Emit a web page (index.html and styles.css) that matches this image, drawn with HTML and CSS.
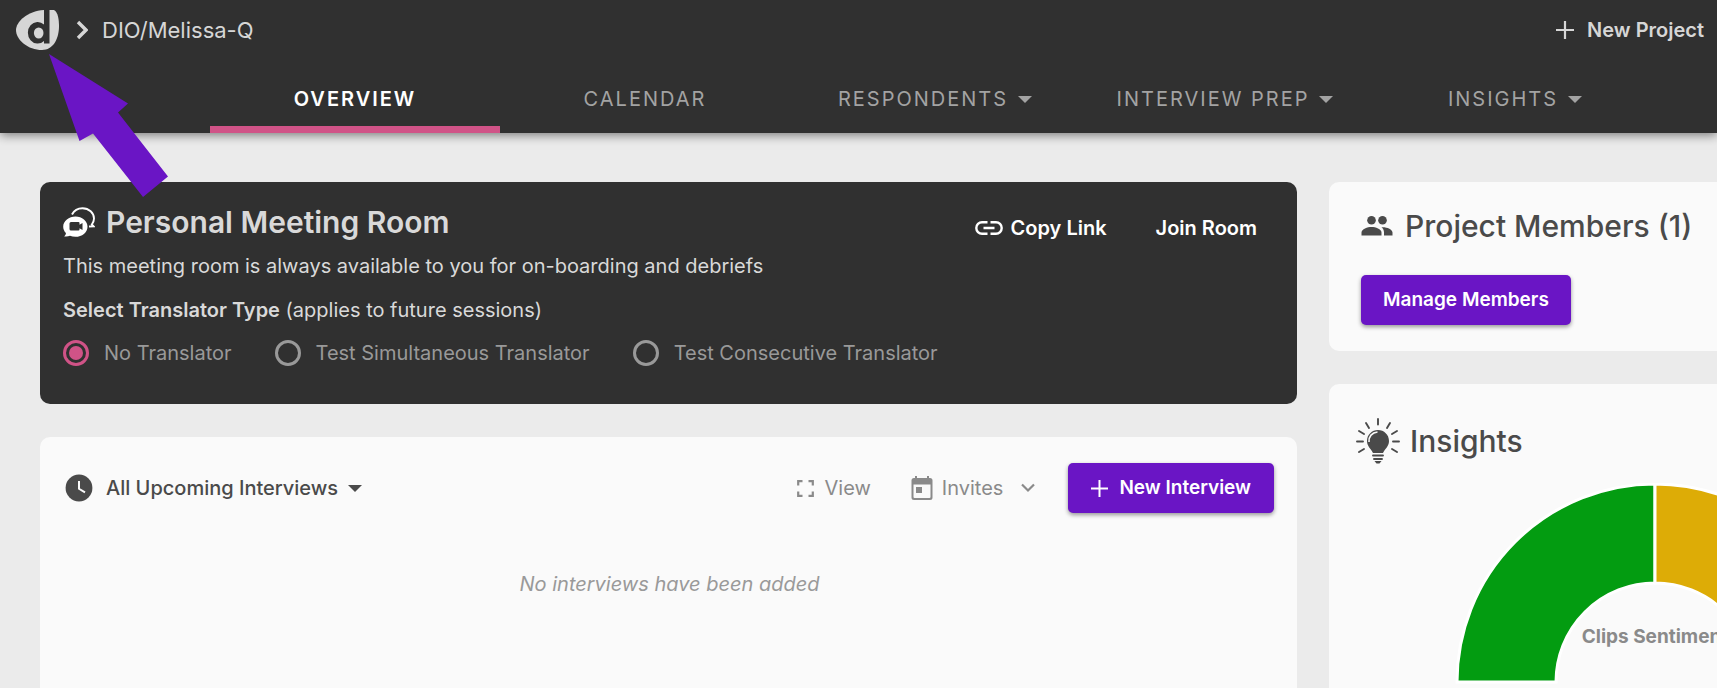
FILE: index.html
```html
<!DOCTYPE html>
<html lang="en">
<head>
  <meta charset="UTF-8">
  <meta name="viewport" content="width=device-width, initial-scale=1.0">
  <title>DIO/Melissa-Q</title>
  <link rel="stylesheet" href="styles.css">
</head>
<body>
  <header class="header">
    <div class="topbar">
      <a class="logo" href="#" aria-label="Home">
        <svg width="44" height="42" viewBox="0 0 44 42">
          <path fill="#d6d6d6" d="M1 21C1 13 12 2 29 1H39C43 3 44 11 44 17C44 30 38 41 27 41C13 41 1 31 1 21Z"/>
          <path fill="#303030" d="M29 0h5.500v34.500H29v-2.500a9.800 10.800 0 1 1 0-16.500z"/>
          <ellipse fill="#d6d6d6" cx="23.700" cy="24" rx="4.800" ry="5.500"/>
        </svg>
      </a>
      <svg class="crumb-arrow" width="12" height="20" viewBox="0 0 12 20"><path d="M2 2l8 8-8 8" fill="none" stroke="#d6d6d6" stroke-width="3.400"/></svg>
      <span class="project-name">DIO/Melissa-Q</span>
      <button class="new-project">
        <svg width="20" height="20" viewBox="0 0 20 20"><path d="M10 1v18M1 10h18" stroke="currentColor" stroke-width="2.200"/></svg>
        New Project
      </button>
    </div>
    <nav class="tabs">
      <a class="tab active" href="#">OVERVIEW</a>
      <a class="tab" href="#">CALENDAR</a>
      <a class="tab" href="#">RESPONDENTS <span class="caret"></span></a>
      <a class="tab" href="#">INTERVIEW PREP <span class="caret"></span></a>
      <a class="tab" href="#">INSIGHTS <span class="caret"></span></a>
    </nav>
  </header>

  <main class="content">
    <div class="column">
      <section class="card room">
        <div class="room-text">
          <h2 class="title">
            <svg width="32" height="30" viewBox="0 0 32 30">
              <path d="M9 7.500C11 3.500 15 1.200 19.500 1.200C26 1.200 31 6 31 11.500C31 14 30 16 28.800 17.500L30.500 19.300L26 19.500" fill="none" stroke="#fff" stroke-width="1.900"/>
              <path d="M12.500 9.500C19 9.500 24.500 14 24.500 19.700C24.500 25.500 19 29.800 12.500 29.800C10.500 29.800 8.600 29.400 7 28.700C5.300 29.500 3 29.800 1 29.300C2.300 28.500 3 27.400 2.900 26C1.200 24.200 0.200 22 0.200 19.700C0.200 14 6 9.500 12.500 9.500Z" fill="#fff"/>
              <path d="M8 15h7.500q1 0 1 1v1.700l3-1.700v7l-3-1.700v1.200q0 1-1 1H8q-1.500 0-1.500-1.500v-5.500q0-1.500 1.500-1.500z" fill="#303030"/>
            </svg>
            Personal Meeting Room
          </h2>
          <p>This meeting room is always available to you for on-boarding and debriefs</p>
          <p><b>Select Translator Type</b> (applies to future sessions)</p>
          <div class="radios">
            <label><input type="radio" name="translator" checked>No Translator</label>
            <label><input type="radio" name="translator">Test Simultaneous Translator</label>
            <label><input type="radio" name="translator">Test Consecutive Translator</label>
          </div>
        </div>
        <div class="room-actions">
          <button>
            <svg width="28" height="14" viewBox="0 0 28 14"><path d="M12.500 1.300H7a5.700 5.700 0 0 0 0 11.400h5.500M15.500 1.300H21a5.700 5.700 0 0 1 0 11.400h-5.500M8.500 7h11" fill="none" stroke="#fff" stroke-width="2.400"/></svg>
            Copy Link
          </button>
          <button>Join Room</button>
        </div>
      </section>

      <section class="card interviews">
        <div class="toolbar">
          <button class="filter">
            <svg width="28" height="28" viewBox="0 0 28 28"><circle cx="14" cy="14" r="13.400" fill="#4a4a4a"/><path d="M14 7v7.800l6 3.600" fill="none" stroke="#fafafa" stroke-width="2"/></svg>
            All Upcoming Interviews <span class="caret"></span>
          </button>
          <button class="tool">
            <svg width="17" height="17" viewBox="0 0 17 17"><path d="M1.200 5.500V1.200h4.300M11.500 1.200h4.300v4.300M15.800 11.500v4.300h-4.300M5.500 15.800H1.200v-4.300" fill="none" stroke="currentColor" stroke-width="2.200"/></svg>
            View
          </button>
          <button class="tool invites">
            <svg width="22" height="24" viewBox="0 0 22 24"><path d="M5 0v4M17 0v4" stroke="currentColor" stroke-width="2"/><path d="M3 2h16q2.500 0 2.500 2.500v17q0 2.500-2.500 2.500H3q-2.500 0-2.500-2.500v-17Q.500 2 3 2zM2.500 8.500v12.500q0 1 1 1h15q1 0 1-1v-12.500z" fill="currentColor" fill-rule="evenodd"/><path d="M5 11h6v6H5z" fill="currentColor"/></svg>
            Invites
            <svg class="chevron" width="14" height="10" viewBox="0 0 14 10"><path d="M1 1.500l6 6 6-6" fill="none" stroke="currentColor" stroke-width="2.200"/></svg>
          </button>
          <button class="primary">
            <svg width="17" height="17" viewBox="0 0 17 17"><path d="M8.500 0v17M0 8.500h17" stroke="currentColor" stroke-width="2"/></svg>
            New Interview
          </button>
        </div>
        <p class="empty">No interviews have been added</p>
      </section>
    </div>

    <div class="column">
      <section class="card side members">
        <h2 class="title">
          <svg width="32" height="20" viewBox="0 0 32 20" fill="#4a4a4a"><circle cx="10.500" cy="4.300" r="4.300"/><circle cx="21.500" cy="4.300" r="4.300"/><path d="M.500 19.500v-3c0-3.500 6-5.500 10-5.500s10 2 10 5.500v3zM20.500 11.200c5-.400 11 1.800 11 5.300v3h-8.500v-3c0-2.200-.900-4-2.500-5.300z"/></svg>
          Project Members (1)
        </h2>
        <button class="primary">Manage Members</button>
      </section>

      <section class="card side insights">
        <h2 class="title">
          <svg width="44" height="46" viewBox="0 0 44 46">
            <path d="M22 1v5.500M10 5l3 5M34 5l-3 5M3 13l5 3M41 13l-5 3M1 23.500h6M43 23.500h-6M3 34l5-3M41 34l-5-3" stroke="#4a4a4a" stroke-width="1.900" stroke-linecap="round"/>
            <path d="M22 12c6 0 11 4.700 11 11 0 5.500-4 7.500-6 12H17c-2-4.500-6-6.500-6-12 0-6.300 5-11 11-11z" fill="#4a4a4a"/>
            <path d="M13 24c-.500-5.500 3-9.500 8.500-10" stroke="#fafafa" stroke-width="1.600" fill="none"/>
            <path d="M17 37.500h10M18 41h8" stroke="#4a4a4a" stroke-width="1.900" stroke-linecap="round"/>
            <path d="M18.500 43h7l-2 2.500h-3z" fill="#4a4a4a"/>
          </svg>
          Insights
        </h2>
        <div class="gauge">
          <svg width="400" height="202" viewBox="0 0 400 202" stroke="#fff" stroke-width="3">
            <path d="M2 199A198 198 0 0 1 200 1V100A99 99 0 0 0 101 199Z" fill="#039c11"/>
            <path d="M200 1A198 198 0 0 1 398 199H299A99 99 0 0 0 200 100Z" fill="#ddac06"/>
          </svg>
          <span class="gauge-label">Clips Sentiment</span>
        </div>
      </section>
    </div>
  </main>

  <!-- Pointer over the page -->
  <svg class="pointer" width="120" height="144" viewBox="0 0 120 144"><path d="M0 0L79 49.500L69 58.500L119 122.500L94 143L44 79.500L30.500 87Z" fill="#6a15c5"/></svg>
</body>
</html>
```
FILE: styles.css
```css
* {
  box-sizing: border-box;
}

body {
  margin: 0;
  height: 100vh;
  display: flex;
  flex-direction: column;
  overflow: hidden;
  background-color: #ebebeb;
  color: #4a4a4a;
  font-family: Inter, "Open Sans", sans-serif;
  font-size: 20px;
  line-height: 24px;
}

button {
  display: flex;
  align-items: center;
  padding: 0;
  border: none;
  background: none;
  color: inherit;
  font: inherit;
  cursor: pointer;
}

h2,
p {
  margin: 0;
}

svg {
  flex-shrink: 0;
}

.header {
  background-color: #303030;
  color: #d6d6d6;
  box-shadow: 0 2px 10px rgba(0, 0, 0, 0.5);
}

.topbar {
  display: flex;
  align-items: center;
  height: 60px;
  padding: 0 13px 0 15px;
}

.logo {
  display: flex;
}

.crumb-arrow {
  margin: 0 14px 0 17px;
}

.project-name {
  font-size: 22px;
}

.new-project {
  gap: 12px;
  margin-left: auto;
  font-weight: 600;
}

.tabs {
  display: flex;
  margin: 0 57px 0 210px;
}

.tab {
  display: flex;
  flex: 1;
  align-items: center;
  justify-content: center;
  gap: 10px;
  height: 73px;
  padding-top: 12px;
  border-bottom: 7px solid transparent;
  color: #a3a3a3;
  letter-spacing: 2px;
  text-decoration: none;
}

.tab.active {
  border-color: #d05387;
  color: #fff;
  font-weight: 600;
}

.caret {
  border: 7px solid transparent;
  border-top-color: currentColor;
  border-bottom: 0;
}

.content {
  display: grid;
  flex: 1;
  grid-template-columns: minmax(0, 1fr) 388px;
  gap: 32px;
  padding: 49px 0 0 40px;
}

.column {
  display: flex;
  flex-direction: column;
  gap: 33px;
}

.card {
  border-radius: 10px;
  background-color: #fafafa;
}

.title {
  display: flex;
  align-items: center;
  gap: 12px;
  font-size: 30px;
  font-weight: 500;
  line-height: 36px;
}

.room {
  display: flex;
  justify-content: space-between;
  padding: 22px 40px 38px 23px;
  background-color: #303030;
  color: #d9d9d9;
}

.room-text {
  display: flex;
  flex-direction: column;
  gap: 20px;
}

.room-text .title {
  gap: 11px;
  margin-bottom: -6px;
  font-weight: 600;
}

.room b {
  font-weight: 600;
}

.radios {
  display: flex;
  gap: 43px;
  margin-top: -2px;
  color: #999;
}

.radios label {
  display: flex;
  align-items: center;
  gap: 15px;
}

.radios input {
  appearance: none;
  display: grid;
  place-items: center;
  width: 26px;
  height: 26px;
  margin: 0;
  border: 3px solid #999;
  border-radius: 50%;
}

.radios input:checked {
  border-color: #d05387;
}

.radios input:checked::before {
  content: "";
  width: 14px;
  height: 14px;
  border-radius: 50%;
  background-color: #d05387;
}

.room-actions {
  display: flex;
  align-items: flex-start;
  gap: 49px;
  padding-top: 12px;
  color: #fff;
  font-weight: 600;
}

.room-actions button {
  gap: 8px;
}

.interviews {
  flex: 1;
  padding: 26px 23px 0 25px;
  border-radius: 10px 10px 0 0;
}

.toolbar {
  display: flex;
  align-items: center;
}

.filter {
  gap: 13px;
  margin-right: auto;
  font-weight: 500;
}

.filter .caret {
  margin-left: -3px;
}

.tool {
  gap: 11px;
  margin-right: 40px;
  color: #8a8a8a;
}

.invites {
  gap: 9px;
  margin-right: 33px;
}

.chevron {
  margin-left: 9px;
}

.primary {
  gap: 11px;
  height: 50px;
  padding: 0 23px;
  border-radius: 5px;
  background-color: #6a15c5;
  box-shadow: 0 2px 4px rgba(0, 0, 0, 0.4);
  color: #fff;
  font-size: 19px;
  font-weight: 600;
}

.empty {
  margin-top: 59px;
  color: #999;
  font-style: italic;
  text-align: center;
}

.side {
  border-radius: 10px 0 0 10px;
  overflow: hidden;
  white-space: nowrap;
}

.members {
  padding: 26px 0 26px 32px;
}

.members .primary {
  margin-top: 31px;
  padding: 0 22px;
}

.insights {
  flex: 1;
  padding: 34px 0 0 27px;
  border-radius: 10px 0 0 0;
}

.insights .title {
  gap: 10px;
  line-height: 46px;
}

.gauge {
  position: relative;
  width: 400px;
  margin: 19px 0 0 99px;
}

.gauge svg {
  display: block;
}

.gauge-label {
  position: absolute;
  top: 142px;
  left: 0;
  width: 100%;
  color: #8a8a8a;
  font-size: 19px;
  font-weight: 700;
  text-align: center;
}

.pointer {
  position: absolute;
  top: 54px;
  left: 49px;
}
```
